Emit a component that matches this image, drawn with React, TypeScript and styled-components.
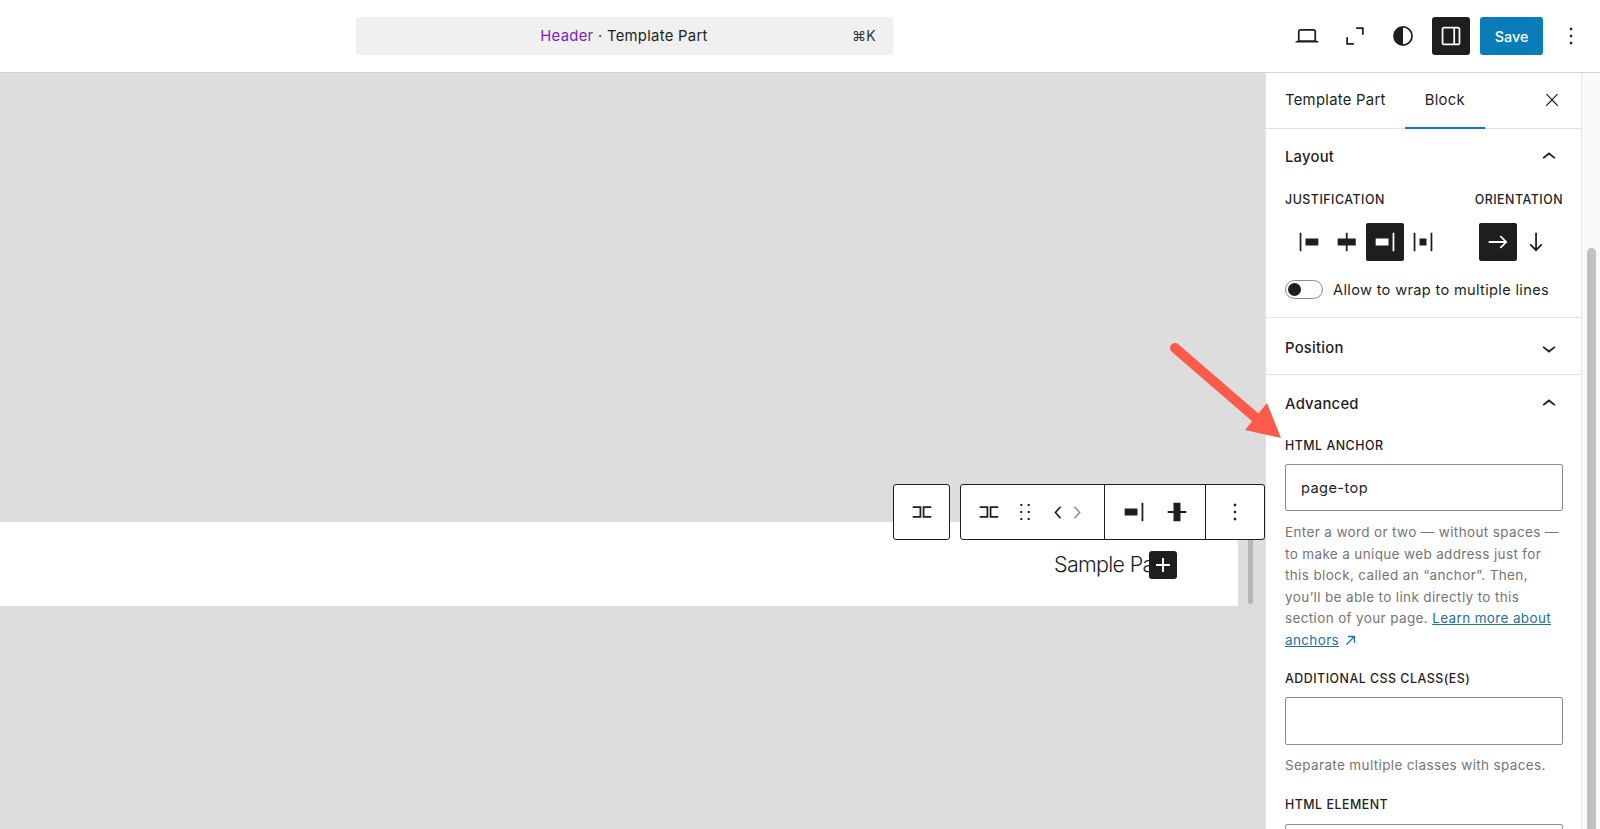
import React from "react";
import styled, { createGlobalStyle } from "styled-components";

const Global = createGlobalStyle`
  html, body { margin: 0; padding: 0; background: #fff; }
  body { font-family: Inter, "Liberation Sans", sans-serif; color: #1e1e1e; -webkit-font-smoothing: antialiased; }
  #root { height: 829px; }
  * { box-sizing: border-box; }
`;

const Page = styled.div`
  position: relative;
  width: 1600px;
  height: 829px;
  overflow: hidden;
  display: flex;
  flex-direction: column;
`;

const TopBar = styled.header`
  height: 73px;
  flex: none;
  display: flex;
  align-items: flex-start;
  padding: 17px 10px 0 356px;
  background: #fff;
  border-bottom: 1px solid #d4d4d4;
`;

const CommandBar = styled.div`
  width: 537px;
  height: 38px;
  background: #f0f0f0;
  border-radius: 4px;
  position: relative;
  display: flex;
  align-items: center;
  justify-content: center;
  font-size: 14.8px;
  letter-spacing: 0.3px;
  padding-right: 1px;
`;

const Purple = styled.span`
  color: #7a1fc4;
`;

const Dot = styled.span`
  color: #444;
`;

const Shortcut = styled.span`
  position: absolute;
  right: 17px;
  top: 10px;
  font-size: 14px;
  color: #333;
`;

const TopActions = styled.div`
  margin-left: auto;
  display: flex;
  align-items: center;
  height: 38px;
`;

const TopButton = styled.span<{ $w?: number; $dark?: boolean }>`
  width: ${(p) => p.$w ?? 48}px;
  height: 38px;
  display: flex;
  align-items: center;
  justify-content: center;
  border-radius: 3px;
  background: ${(p) => (p.$dark ? "#1e1e1e" : "transparent")};
  color: ${(p) => (p.$dark ? "#fff" : "#1e1e1e")};
  margin-left: ${(p) => (p.$dark ? 5 : 0)}px;
`;

const SaveButton = styled.span`
  width: 63px;
  height: 38px;
  margin: 0 9px 0 10px;
  display: flex;
  align-items: center;
  justify-content: center;
  background: #0a7cba;
  color: #fff;
  border-radius: 3px;
  font-size: 14.4px;
  font-weight: 500;
`;

const Main = styled.div`
  flex: 1;
  display: flex;
  min-height: 0;
`;

const Canvas = styled.main`
  position: relative;
  width: 1265px;
  flex: none;
  background: #dddddd;
  padding-top: 449px;
`;

const PageRow = styled.div`
  display: flex;
  height: 84px;
`;

const PageStrip = styled.div`
  position: relative;
  width: 1238px;
  background: #fff;
  padding: 28px 0 0 1054px;
  font-size: 21.5px;
  font-weight: 300;
  line-height: 28px;
  letter-spacing: -0.7px;
  white-space: nowrap;
  overflow: hidden;
`;

const AddBlock = styled.span`
  position: absolute;
  left: 1149px;
  top: 29px;
  width: 28px;
  height: 28px;
  border-radius: 3px;
  background: #1e1e1e;
  color: #fff;
  display: flex;
  align-items: center;
  justify-content: center;
`;

const Gutter = styled.div`
  flex: 1;
  display: flex;
  justify-content: center;
  padding-left: 0;
`;

const GutterThumb = styled.div`
  width: 5px;
  height: 82px;
  margin-left: -3px;
  background: #b5b5b5;
  border-radius: 3px;
`;

const ToolbarRow = styled.div`
  position: absolute;
  left: 893px;
  top: 411px;
  display: flex;
  gap: 10px;
`;

const Toolbar = styled.div`
  display: flex;
  height: 56px;
  background: #fff;
  border: 1.5px solid #1e1e1e;
  border-radius: 3px;
`;

const ToolGroup = styled.div<{ $pl?: number; $pr?: number; $last?: boolean }>`
  display: flex;
  align-items: center;
  padding: 0 ${(p) => p.$pr ?? 0}px 0 ${(p) => p.$pl ?? 0}px;
  border-right: ${(p) => (p.$last ? "none" : "1.5px solid #1e1e1e")};
`;

const ToolIcon = styled.span<{ $w?: number; $muted?: boolean }>`
  width: ${(p) => p.$w ?? 36}px;
  height: 53px;
  display: flex;
  align-items: center;
  justify-content: center;
  color: ${(p) => (p.$muted ? "#8f8f8f" : "#1e1e1e")};
`;

const Sidebar = styled.aside`
  width: 317px;
  flex: none;
  background: #fff;
  border-left: 1px solid #e0e0e0;
  border-right: 1px solid #e6e6e6;
  overflow: hidden;
`;

const Tabs = styled.div`
  height: 56px;
  display: flex;
  align-items: stretch;
  border-bottom: 1px solid #e0e0e0;
  font-size: 14.8px;
  letter-spacing: 0.3px;
`;

const Tab = styled.span<{ $active?: boolean }>`
  display: flex;
  align-items: center;
  padding: 0 ${(p) => (p.$active ? 20 : 19)}px 3px;
  box-shadow: ${(p) => (p.$active ? "inset 0 -2px 0 #0a7cba" : "none")};
  margin-bottom: -1px;
`;

const CloseButton = styled.span`
  margin-left: auto;
  width: 58px;
  display: flex;
  align-items: center;
  justify-content: center;
  padding-bottom: 1px;
`;

const Section = styled.section`
  border-bottom: 1px solid #e4e4e4;
  padding: 0 18px 0 19px;
`;

const SectionHead = styled.div<{ $nudge?: number }>`
  height: 56px;
  display: flex;
  align-items: center;
  justify-content: space-between;
  padding-top: ${(p) => p.$nudge ?? 0}px;
  font-size: 14.8px;
  font-weight: 450;
  letter-spacing: 0.25px;
`;

const LabelRow = styled.div`
  display: flex;
  justify-content: space-between;
  margin-top: 7px;
`;

const FieldLabel = styled.div<{ $mt?: number }>`
  font-size: 12.4px;
  line-height: 16px;
  letter-spacing: 0.5px;
  text-transform: uppercase;
  font-weight: 450;
  margin-top: ${(p) => p.$mt ?? 0}px;
`;

const ChoiceRow = styled.div`
  display: flex;
  justify-content: space-between;
  margin-top: 15px;
  padding: 0 8px 0 5.5px;
`;

const ChoiceGroup = styled.div`
  display: flex;
`;

const Choice = styled.span<{ $active?: boolean; $w?: number }>`
  width: ${(p) => p.$w ?? 37.9}px;
  height: 38px;
  display: flex;
  align-items: center;
  justify-content: center;
  background: ${(p) => (p.$active ? "#1e1e1e" : "transparent")};
  color: ${(p) => (p.$active ? "#fff" : "#1e1e1e")};
  border-radius: 2px;
`;

const ToggleRow = styled.div`
  display: flex;
  align-items: center;
  gap: 10px;
  margin-top: 19px;
  padding-bottom: 18px;
  font-size: 14.6px;
  letter-spacing: 0.33px;
`;

const ToggleTrack = styled.span`
  width: 38px;
  height: 19px;
  flex: none;
  border: 1.5px solid #8c8c8c;
  border-radius: 10px;
  padding: 1.5px;
  background: #fff;
  display: flex;
`;

const ToggleKnob = styled.span`
  width: 13px;
  height: 13px;
  border-radius: 50%;
  background: #1e1e1e;
`;

const TextBox = styled.div<{ $h?: number; $mt?: number }>`
  height: ${(p) => p.$h ?? 48}px;
  margin-top: ${(p) => p.$mt ?? 11}px;
  border: 1px solid #8c8c8c;
  border-radius: 2px;
  padding: 0 15px;
  display: flex;
  align-items: center;
  font-size: 14.6px;
  letter-spacing: 0.4px;
  background: #fff;
`;

const Help = styled.p<{ $mt?: number }>`
  margin: ${(p) => p.$mt ?? 11}px 0 0;
  padding-right: 1px;
  font-size: 13.5px;
  line-height: 21.5px;
  letter-spacing: 0.36px;
  color: #757575;
`;

const HelpLink = styled.a`
  color: #1f6f9f;
  text-decoration: underline;
`;

const ScrollTrack = styled.div`
  flex: 1;
  background: #fafafa;
  padding: 175px 4px 0 5px;
`;

const ScrollThumb = styled.div`
  height: 600px;
  background: #c1c1c1;
  border-radius: 5px 5px 0 0;
`;

const Arrow = styled.svg`
  position: absolute;
  left: 0;
  top: 0;
  pointer-events: none;
`;

const IconSvg = styled.svg`
  flex: none;
  display: block;
`;

const Icon = ({ d, size = 28 }: { d: string; size?: number }) => (
  <IconSvg width={size} height={size} viewBox="0 0 24 24" fill="currentColor">
    <path d={d} />
  </IconSvg>
);

const P = {
  desktop:
    "M20.5 16h-.7V8c0-1.1-.9-2-2-2H6.2c-1.1 0-2 .9-2 2v8h-.7c-.8 0-1.5.7-1.5 1.5h20c0-.8-.7-1.5-1.5-1.5zM5.7 8c0-.3.2-.5.5-.5h11.6c.3 0 .5.2.5.5v7.6H5.7V8z",
  more: "M13 19h-2v-2h2v2zm0-6h-2v-2h2v2zm0-6h-2V5h2v2z",
  up: "M6.5 12.4L12 8l5.5 4.4-.9 1.2L12 10l-4.5 3.6-1-1.2z",
  down: "M17.5 11.6L12 16l-5.5-4.4.9-1.2L12 14l4.6-3.6 1 1.2z",
  left: "M14.6 7l-1.2-1L8 12l5.4 6 1.2-1-4.6-5z",
  right: "M10.6 6L9.4 7l4.6 5-4.6 5 1.2 1 5.4-6z",
  group: "M4 7h7.4v10H4v-1.5h5.9v-7H4zM20 7h-7.4v10H20v-1.5h-5.9v-7H20z",
  drag: "M8 6.8h1.7V5.1H8zm0 6h1.7v-1.7H8zm0 6h1.7v-1.7H8zm6.3-13.7v1.7H16V5.1zm0 7.7H16v-1.7h-1.7zm0 6H16v-1.7h-1.7z",
  jLeft: "M9 9v6h11V9H9zM4 20h1.5V4H4v16z",
  jCenter: "M12.5 15v5H11v-5H4V9h7V4h1.5v5h7v6h-7Z",
  jRight: "M4 15h11V9H4v6zM18.5 4v16H20V4h-1.5z",
  jBetween: "M9 15h6V9H9v6zm-5 5h1.5V4H4v16zM18.5 4v16H20V4h-1.5z",
  vCenter: "M20 11.2h-5V4H9v7.2H4v1.6h5V20h6v-7.2h5z",
  arrowRight: "m14.5 6.5-1 1 3.7 3.7H4v1.6h13.2l-3.7 3.7 1 1 5.6-5.5z",
  arrowDown: "m16.5 13.5-3.7 3.7V4h-1.5v13.2l-3.8-3.7-1 1 5.5 5.6 5.5-5.6z",
  plus: "M18 11.2h-5.2V6h-1.6v5.2H6v1.6h5.2V18h1.6v-5.2H18z",
  close: "M13 11.8l6.1-6.3-1-1-6.1 6.2-6.1-6.2-1 1 6.1 6.3-6.5 6.7 1 1 6.5-6.6 6.5 6.6 1-1z",
  panel:
    "M18 4H6c-1.1 0-2 .9-2 2v12c0 1.1.9 2 2 2h12c1.1 0 2-.9 2-2V6c0-1.1-.9-2-2-2zM5.5 18V6c0-.3.2-.5.5-.5h8v13H6c-.3 0-.5-.2-.5-.5zm13 0c0 .3-.2.5-.5.5h-2.5v-13H18c.3 0 .5.2.5.5v12z",
  corners: "M13 4.5h6.5V11H18V6h-5zM4.5 13H6v5h5v1.5H4.5z",
  contrast: "M12 3.5a8.5 8.5 0 1 0 0 17 8.5 8.5 0 0 0 0-17zm0 1.5a7 7 0 0 1 0 14z",
};

const ExternalSvg = styled.svg`
  margin-left: 2px;
  vertical-align: -1px;
`;

const ExternalMark = () => (
  <ExternalSvg width="11" height="11" viewBox="0 0 11 11" fill="none" stroke="#1f6f9f" strokeWidth="1.3">
    <path d="M3 1.5h6.5V8M9.5 1.5 1.5 9.5" />
  </ExternalSvg>
);

export default function App() {
  return (
    <Page>
      <Global />
      <TopBar>
        <CommandBar>
          <span>
            <Purple>Header</Purple> <Dot>·</Dot> Template Part
          </span>
          <Shortcut>⌘K</Shortcut>
        </CommandBar>
        <TopActions>
          <TopButton><Icon d={P.desktop} /></TopButton>
          <TopButton><Icon d={P.corners} /></TopButton>
          <TopButton><Icon d={P.contrast} /></TopButton>
          <TopButton $w={38} $dark><Icon d={P.panel} /></TopButton>
          <SaveButton>Save</SaveButton>
          <TopButton $w={38}><Icon d={P.more} /></TopButton>
        </TopActions>
      </TopBar>
      <Main>
        <Canvas>
          <PageRow>
            <PageStrip>
              Sample Pa
              <AddBlock><Icon d={P.plus} /></AddBlock>
            </PageStrip>
            <Gutter><GutterThumb /></Gutter>
          </PageRow>
          <ToolbarRow>
            <Toolbar>
              <ToolIcon $w={55}><Icon d={P.group} /></ToolIcon>
            </Toolbar>
            <Toolbar>
              <ToolGroup $pl={10} $pr={19}>
                <ToolIcon><Icon d={P.group} /></ToolIcon>
                <ToolIcon><Icon d={P.drag} /></ToolIcon>
                <ToolIcon $w={6} />
                <ToolIcon $w={18}><Icon d={P.left} size={25} /></ToolIcon>
                <ToolIcon $w={18} $muted><Icon d={P.right} size={25} /></ToolIcon>
              </ToolGroup>
              <ToolGroup $pl={7} $pr={7}>
                <ToolIcon $w={43}><Icon d={P.jRight} /></ToolIcon>
                <ToolIcon $w={43}><Icon d={P.vCenter} /></ToolIcon>
              </ToolGroup>
              <ToolGroup $last>
                <ToolIcon $w={58}><Icon d={P.more} /></ToolIcon>
              </ToolGroup>
            </Toolbar>
          </ToolbarRow>
        </Canvas>
        <Sidebar>
          <Tabs>
            <Tab>Template Part</Tab>
            <Tab $active>Block</Tab>
            <CloseButton><Icon d={P.close} size={20} /></CloseButton>
          </Tabs>
          <Section>
            <SectionHead>Layout<Icon d={P.up} /></SectionHead>
            <LabelRow>
              <FieldLabel>Justification</FieldLabel>
              <FieldLabel>Orientation</FieldLabel>
            </LabelRow>
            <ChoiceRow>
              <ChoiceGroup>
                <Choice><Icon d={P.jLeft} /></Choice>
                <Choice><Icon d={P.jCenter} /></Choice>
                <Choice $active><Icon d={P.jRight} /></Choice>
                <Choice><Icon d={P.jBetween} /></Choice>
              </ChoiceGroup>
              <ChoiceGroup>
                <Choice $active $w={38}><Icon d={P.arrowRight} /></Choice>
                <Choice $w={38}><Icon d={P.arrowDown} /></Choice>
              </ChoiceGroup>
            </ChoiceRow>
            <ToggleRow>
              <ToggleTrack><ToggleKnob /></ToggleTrack>
              Allow to wrap to multiple lines
            </ToggleRow>
          </Section>
          <Section>
            <SectionHead $nudge={3}>Position<Icon d={P.down} /></SectionHead>
          </Section>
          <Section>
            <SectionHead $nudge={2}>Advanced<Icon d={P.up} /></SectionHead>
            <FieldLabel $mt={7}>HTML anchor</FieldLabel>
            <TextBox $h={47} $mt={10}>page-top</TextBox>
            <Help>
              Enter a word or two — without spaces — to make a unique web address just for this block, called an “anchor”. Then, you’ll be able to link directly to this section of your page.{" "}
              <HelpLink>Learn more about</HelpLink> <HelpLink>anchors</HelpLink> <ExternalMark />
            </Help>
            <FieldLabel $mt={20}>Additional CSS class(es)</FieldLabel>
            <TextBox $mt={10} />
            <Help $mt={10}>Separate multiple classes with spaces.</Help>
            <FieldLabel $mt={20}>HTML element</FieldLabel>
            <TextBox />
          </Section>
        </Sidebar>
        <ScrollTrack><ScrollThumb /></ScrollTrack>
      </Main>
      <Arrow width="1600" height="829" viewBox="0 0 1600 829">
        <path d="M1175 348 L1256 418" stroke="#fc5a4b" strokeWidth="10" strokeLinecap="round" fill="none" />
        <path d="M1267 403 L1245 430 L1281 438 Z" fill="#fc5a4b" />
      </Arrow>
    </Page>
  );
}
